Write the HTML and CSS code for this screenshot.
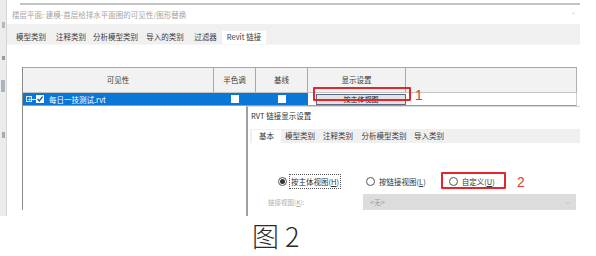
FILE: index.html
```html
<!DOCTYPE html>
<html lang="zh">
<head>
<meta charset="utf-8">
<link rel="stylesheet" href="styles.css">
</head>
<body>
<div class="page">
  <div class="screen">
    <div class="strip">
      <div class="mark m1"></div>
      <div class="mark m2"></div>
      <div class="mark m3"></div>
      <div class="mark m4"></div>
    </div>
    <div class="window">
      <div class="topline"></div>
      <div class="title">楼层平面: 建模-首层给排水平面图的可见性/图形替换<span class="updown">⌃</span></div>
      <div class="tabs">
        <div class="tab t1">模型类别</div>
        <div class="tab t2">注释类别</div>
        <div class="tab t3">分析模型类别</div>
        <div class="tab t4">导入的类别</div>
        <div class="tab t5">过滤器</div>
        <div class="tab t6 active">Revit 链接</div>
      </div>
      <div class="table">
        <div class="thead">
          <div class="th">可见性</div>
          <div class="th">半色调</div>
          <div class="th">基线</div>
          <div class="th">显示设置</div>
          <div class="th last"></div>
        </div>
        <div class="trow">
          <div class="td sel name">
            <span class="expander">+</span><span class="dash"></span><span class="chk">
              <svg width="8" height="8" viewBox="0 0 8 8"><rect x="0" y="0" width="8" height="8" fill="#fff"/><path d="M1.5 4 L3.3 6 L6.6 1.6" stroke="#0b5fa8" stroke-width="1.4" fill="none"/></svg></span>
            <span class="fname">每日一技测试.rvt</span>
          </div>
          <div class="td sel center"><span class="box"></span></div>
          <div class="td sel center"><span class="box"></span></div>
          <div class="td btncell"><div class="btn">按主体视图</div></div>
          <div class="td"></div>
        </div>
      </div>
    </div>
  </div>
  <div class="caption">图 2</div>

  <div class="redbox rb1"></div>
  <div class="num n1">1</div>

  <div class="dialog">
    <div class="dtitle">RVT 链接显示设置</div>
    <div class="dtabs">
      <div class="dtab active d1">基本</div>
      <div class="dtab d2">模型类别</div>
      <div class="dtab d3">注释类别</div>
      <div class="dtab d4">分析模型类别</div>
      <div class="dtab d5">导入类别</div>
    </div>
    <div class="radios">
      <div class="radio r1"><span class="circle on"></span><span class="rlabel focus">按主体视图(<u>H</u>)</span></div>
      <div class="radio r2"><span class="circle"></span><span class="rlabel">按链接视图(<u>L</u>)</span></div>
      <div class="radio r3"><span class="circle"></span><span class="rlabel">自定义(<u>U</u>)</span></div>
    </div>
    <div class="viewrow">
      <span class="vlabel">链接视图(<u>K</u>):</span>
      <div class="select"><span>&lt;无&gt;</span><span class="chev">⌄</span></div>
    </div>
  </div>

  <div class="redbox rb2"></div>
  <div class="num n2">2</div>
</div>
</body>
</html>
```

FILE: styles.css
```css
* { box-sizing: border-box; }
html, body { margin: 0; padding: 0; background: #fff; }
body {
  width: 596px; height: 256px; overflow: hidden;
  font-family: "Noto Sans CJK SC", "Liberation Sans", sans-serif;
  color: #333;
}
.page { position: relative; width: 596px; height: 256px; }
.screen { display: flex; height: 216px; }

.strip {
  width: 7px; background: #ececec; border-right: 1px solid #d6d6d6;
  display: flex; flex-direction: column; align-items: center;
}
.mark { width: 3px; background: #b8b8b8; }
.m1 { height: 6px; margin-top: 22px; }
.m2 { height: 4px; margin-top: 28px; background: #999; }
.m3 { height: 12px; margin-top: 20px; width: 4px; background: #a8b4c4; }
.m4 { height: 6px; margin-top: 40px; background: #aaa; }

.window { width: 573px; display: flex; flex-direction: column; }
.topline { margin: 3px 0 0 13px; height: 2px; background: #c4c4c4; }
.title {
  position: relative;
  height: 19px; line-height: 19px; padding-left: 5px;
  font-size: 7.5px; color: #a4a4a4; white-space: nowrap;
}
.updown { position: absolute; right: 4px; top: 0; font-size: 6px; color: #bbb; }

.tabs {
  height: 21px; background: #f0f0f0; display: flex; align-items: flex-end;
  padding-left: 3px; border-bottom: 1px solid #f6f6f6;
}
.tab {
  height: 13px; line-height: 12px; font-size: 7.5px; color: #3a3a3a;
  text-align: center; white-space: nowrap;
}
.t1 { width: 42px; }
.t2 { width: 38px; }
.t3 { width: 51px; }
.t4 { width: 48px; }
.t5 { width: 33px; }
.t6 { width: 44px; }
.tab.active { background: #fff; }

.table {
  margin: 22px 3px 6px 15px; flex: 1;
  border-left: 1px solid #8a8a8a;
}
.thead, .trow {
  display: grid; grid-template-columns: 191px 42px 52px 98px 1fr;
}
.thead {
  height: 26px; background: #f2f2f2;
  border-top: 1px solid #a8a8a8; border-right: 1px solid #b0b0b0;
  border-bottom: 1px solid #c4c4c4;
}
.th {
  font-size: 7.5px; line-height: 24px; text-align: center; color: #3a3a3a;
  border-right: 1px solid #a8a8a8;
}
.th.last { border-right: none; }
.trow { height: 13px; border-bottom: 1px solid #9c9c9c; border-right: 1px solid #d0d0d0; }
.td { height: 12px; display: flex; align-items: center; }
.td.sel { background: #0a77d5; }
.td.center { justify-content: center; }
.name { padding-left: 3px; }
.expander {
  width: 6px; height: 6px; border: 1px solid #d8e6f5; color: #fff;
  font-size: 6px; line-height: 4px; text-align: center; font-family: "DejaVu Sans", sans-serif;
}
.dash { width: 4px; height: 1px; background: #e8eef6; }
.chk { width: 8px; height: 8px; display: flex; }
.fname { margin-left: 5px; color: #fff; font-size: 7.5px; white-space: nowrap; }
.box { width: 8px; height: 8px; background: #fff; }
.btncell { padding-left: 8px; background: #fff; }
.btn {
  width: 90px; height: 11px; border: 1px solid #5a6a80; background: #e4e4e4;
  font-size: 7px; line-height: 9px; text-align: center; color: #222;
}

.caption {
  height: 40px; line-height: 40px; padding-left: 252px;
  font-size: 27px; color: #2a2a2a; font-weight: 300;
  font-family: "Noto Sans CJK SC", "DejaVu Sans", sans-serif;
}

.redbox { position: absolute; border: 2px solid #e2262a; border-radius: 1px; }
.rb1 { left: 313px; top: 87px; width: 98px; height: 14px; }
.rb2 { left: 441px; top: 172px; width: 65px; height: 17px; }
.num {
  position: absolute; color: #e43a2e; font-size: 14px; line-height: 14px;
  font-family: "Liberation Sans", sans-serif;
}
.n1 { left: 415px; top: 88px; }
.n2 { left: 517px; top: 175px; }

.dialog {
  position: absolute; left: 246px; top: 106px; width: 334px; height: 110px;
  background: #fff; border-left: 2px solid #a0a0a0; border-top: 1px solid #d8d8d8;
  display: flex; flex-direction: column;
}
.dtitle {
  height: 22px; line-height: 18px; padding-left: 3px; font-size: 7.5px; color: #333;
}
.dtabs {
  height: 14px; margin-left: 2px; background: #f0f0f0; display: flex; align-items: flex-end;
  padding-left: 2px;
}
.dtab { height: 13px; line-height: 12px; font-size: 7.5px; text-align: center; color: #3a3a3a; white-space: nowrap; }
.dtab.active { background: #fff; }
.d1 { width: 29px; }
.d2 { width: 38px; }
.d3 { width: 38px; }
.d4 { width: 54px; }
.d5 { width: 36px; }

.radios { display: flex; align-items: center; height: 18px; margin-top: 29px; padding-left: 30px; }
.radio { display: flex; align-items: center; font-size: 7.5px; color: #333; white-space: nowrap; }
.r2 { margin-left: 25px; }
.r3 { margin-left: 21px; }
.circle {
  width: 9px; height: 9px; border: 1px solid #555; border-radius: 50%; background: #fff;
  margin-right: 2px; display: flex; align-items: center; justify-content: center;
}
.circle.on::after { content: ""; width: 5px; height: 5px; border-radius: 50%; background: #333; }
.rlabel { padding: 1px 1px; border: 1px solid transparent; }
.rlabel.focus { border: 1px dotted #555; }
.rlabel u { text-decoration: underline; }

.viewrow { display: flex; align-items: center; margin-top: 4px; padding-left: 20px; height: 16px; }
.vlabel { font-size: 6.5px; color: #b0b0b0; width: 95px; white-space: nowrap; }
.select {
  width: 213px; height: 16px; background: #dcdcdc; display: flex; align-items: center;
  justify-content: space-between; padding: 0 5px 0 7px; font-size: 7px; color: #9a9a9a;
}
.chev { color: #c4c4c4; font-size: 8px; line-height: 8px; font-family: "DejaVu Sans", sans-serif; }
```
